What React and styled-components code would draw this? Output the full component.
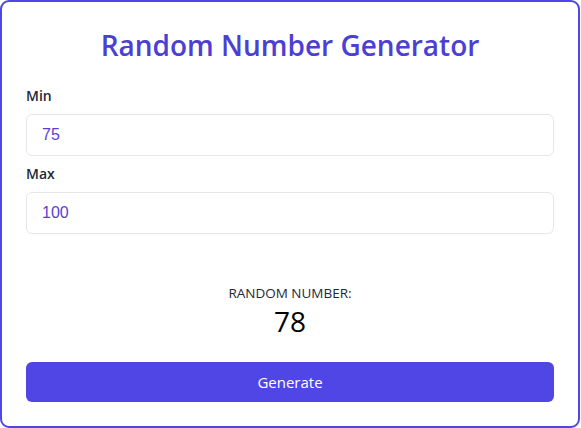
import { useState } from "react";
import styled, { createGlobalStyle } from "styled-components";

const GlobalStyle = createGlobalStyle`
	* {
		box-sizing: border-box;
	}
	body {
		margin: 0;
		background: #ffffff;
		font-family: "Open Sans", "Noto Sans", sans-serif;
	}
`;

const Card = styled.div`
	width: 580px;
	height: 428px;
	border: 2px solid #4f46e5;
	border-radius: 9px;
	background: #ffffff;
	padding: 24px;
	display: flex;
	flex-direction: column;
`;

const Title = styled.h1`
	margin: 0 0 22px;
	font-size: 28px;
	line-height: 38px;
	font-weight: 600;
	text-align: center;
	color: #4c3fd4;
`;

const Field = styled.div`
	display: flex;
	flex-direction: column;
	gap: 8px;
	margin-bottom: ${props => props.$spacing || 0}px;
`;

const Label = styled.label`
	font-size: 14px;
	line-height: 20px;
	font-weight: 600;
	color: #1f2937;
`;

const Input = styled.input`
	height: 42px;
	width: 100%;
	border: 1px solid #e5e7eb;
	border-radius: 6px;
	padding: 0 15px;
	font-family: "Liberation Sans", Arial, sans-serif;
	font-size: 16px;
	color: #5a3dd8;
	outline: none;
	&:focus {
		border-color: #a5b4fc;
	}
`;

const Result = styled.div`
	margin-top: 49px;
	display: flex;
	flex-direction: column;
	align-items: center;
	color: #1f2937;
	.result-label {
		font-size: 13.5px;
		line-height: 20px;
	}
	.result-value {
		font-size: 28px;
		line-height: 36px;
		color: #000000;
	}
`;

const GenerateBtn = styled.button`
	margin-top: 23px;
	height: 40px;
	width: 100%;
	border: none;
	border-radius: 6px;
	background-color: #4f46e5;
	color: #ffffff;
	font-family: inherit;
	font-size: 15px;
	cursor: pointer;
`;

function App() {
	const [min, setMin] = useState("75");
	const [max, setMax] = useState("100");
	const [value, setValue] = useState(78);

	const generateHandler = () => {
		const lo = Number(min);
		const hi = Number(max);
		if (Number.isNaN(lo) || Number.isNaN(hi) || hi < lo) return;
		setValue(Math.floor(Math.random() * (hi - lo + 1)) + lo);
	};

	return (
		<>
			<GlobalStyle />
			<Card>
				<Title>Random Number Generator</Title>
				<Field $spacing={8}>
					<Label>Min</Label>
					<Input value={min} onChange={e => setMin(e.target.value)} />
				</Field>
				<Field>
					<Label>Max</Label>
					<Input value={max} onChange={e => setMax(e.target.value)} />
				</Field>
				<Result>
					<div className="result-label">RANDOM NUMBER:</div>
					<div className="result-value">{value}</div>
				</Result>
				<GenerateBtn onClick={generateHandler}>Generate</GenerateBtn>
			</Card>
		</>
	);
}

export default App;
